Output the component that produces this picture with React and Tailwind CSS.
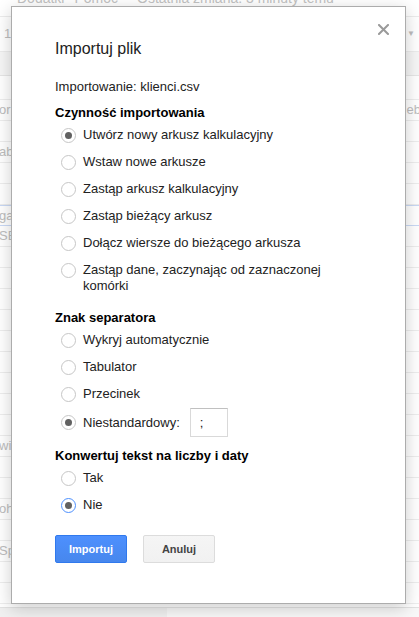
import React from "react";

const rowLabels = {
  0: "or",
  2: "ab",
  5: "gas",
  6: "SE",
  16: "wi",
  19: "oh",
  21: "Sp",
};

function Radio({ checked, focused }) {
  return (
    <span
      className={`mt-[0.5px] flex h-[15px] w-[15px] shrink-0 items-center justify-center rounded-full border bg-white ${
        focused ? "border-[#4d90fe]" : "border-[#c6c6c6]"
      }`}
    >
      {checked && <span className="h-[7px] w-[7px] rounded-full bg-[#616161]" />}
    </span>
  );
}

function Option({ label, checked, focused, className = "" }) {
  return (
    <label className={`ml-[6px] flex items-start gap-[7px] leading-[16px] ${className}`}>
      <Radio checked={checked} focused={focused} />
      <span>{label}</span>
    </label>
  );
}

function SheetBackground() {
  const rows = Array.from({ length: 24 });
  return (
    <div className="flex h-[617px] flex-col bg-white text-[13px] text-[#bdbdbd]">
      <div className="h-[16px] shrink-0 overflow-hidden">
        <div className="-mt-[11px] flex gap-[10px] pl-[17px] text-[14px] leading-[18px] text-[#c2c2c2]">
          <span>Dodatki</span>
          <span>Pomoc</span>
          <span className="ml-[9px]">Ostatnia zmiana: 3 minuty temu</span>
        </div>
      </div>
      <div className="flex h-[36px] shrink-0 items-center justify-between border-y border-[#ececec] px-[4px]">
        <span>1</span>
        <span className="text-[8px]">▼</span>
      </div>
      <div className="h-[24px] shrink-0 border-b border-[#e6e6e6] bg-[#f6f6f6]" />
      <div className="h-[24px] shrink-0 border-b border-[#ededed]" />
      {rows.map((_, i) => (
        <div
          key={i}
          className={`flex h-[21px] shrink-0 items-center justify-between border-b ${
            i === 5 ? "border-t border-[#c9d9f5]" : "border-[#ededed]"
          }`}
        >
          <span className="-ml-[1px]">{rowLabels[i] || ""}</span>
          <span className="-mr-[2px]">{i === 0 ? "eb" : ""}</span>
        </div>
      ))}
      <div className="mt-[3px] flex h-[10px] shrink-0 border-t border-[#e2e2e2]">
        <div className="w-[167px] bg-[#f0f0f0]" />
        <div className="flex-1 bg-[#f8f8f8]" />
      </div>
    </div>
  );
}

export default function App() {
  return (
    <div className="relative h-[617px] w-full overflow-hidden font-['Liberation_Sans',Arial,sans-serif]">
      <SheetBackground />

      <div className="absolute left-[11px] top-[6px] h-[598px] w-[395px] border border-[#acacac] bg-white pl-[43px] pt-[32px] text-[13px] text-[#222] shadow-[0_4px_16px_rgba(0,0,0,0.2)]">
        <button className="absolute right-[16px] top-[17px] text-[#9a9a9a]" aria-label="Zamknij">
          <svg width="11" height="11" viewBox="0 0 11 11">
            <path d="M1 1 L10 10 M10 1 L1 10" stroke="currentColor" strokeWidth="2" strokeLinecap="square" />
          </svg>
        </button>

        <h2 className="text-[16px] leading-[20px] text-[#222]">Importuj plik</h2>

        <p className="mt-[20px] leading-[16px]">Importowanie: klienci.csv</p>

        <h3 className="mt-[10px] font-bold leading-[16px] text-[#000]">Czynność importowania</h3>
        <div className="mt-[6px] flex flex-col gap-[11px]">
          <Option label="Utwórz nowy arkusz kalkulacyjny" checked />
          <Option label="Wstaw nowe arkusze" />
          <Option label="Zastąp arkusz kalkulacyjny" />
          <Option label="Zastąp bieżący arkusz" />
          <Option label="Dołącz wiersze do bieżącego arkusza" />
          <Option label="Zastąp dane, zaczynając od zaznaczonej komórki" className="w-[280px]" />
        </div>

        <h3 className="mt-[16px] font-bold leading-[16px] text-[#000]">Znak separatora</h3>
        <div className="mt-[6px] flex flex-col gap-[11px]">
          <Option label="Wykryj automatycznie" />
          <Option label="Tabulator" />
          <Option label="Przecinek" />
        </div>
        <div className="ml-[6px] mt-[6px] flex h-[29px] items-center gap-[7px]">
          <Radio checked />
          <span>Niestandardowy:</span>
          <input
            defaultValue=";"
            className="ml-[3px] h-[29px] w-[38px] border border-[#d9d9d9] border-t-[#c0c0c0] px-[9px] text-[13px] text-[#222] outline-none"
          />
        </div>

        <h3 className="mt-[11px] font-bold leading-[16px] text-[#000]">Konwertuj tekst na liczby i daty</h3>
        <div className="mt-[6px] flex flex-col gap-[11px]">
          <Option label="Tak" />
          <Option label="Nie" checked focused />
        </div>

        <div className="mt-[22px] flex gap-[16px]">
          <button className="h-[28px] w-[72px] rounded-[2px] border border-[#3079ed] bg-gradient-to-b from-[#4d90fe] to-[#4787ed] text-[11px] font-bold text-white">
            Importuj
          </button>
          <button className="h-[28px] w-[72px] rounded-[2px] border border-[#dcdcdc] bg-gradient-to-b from-[#f5f5f5] to-[#f1f1f1] text-[11px] font-bold text-[#444]">
            Anuluj
          </button>
        </div>
      </div>
    </div>
  );
}
